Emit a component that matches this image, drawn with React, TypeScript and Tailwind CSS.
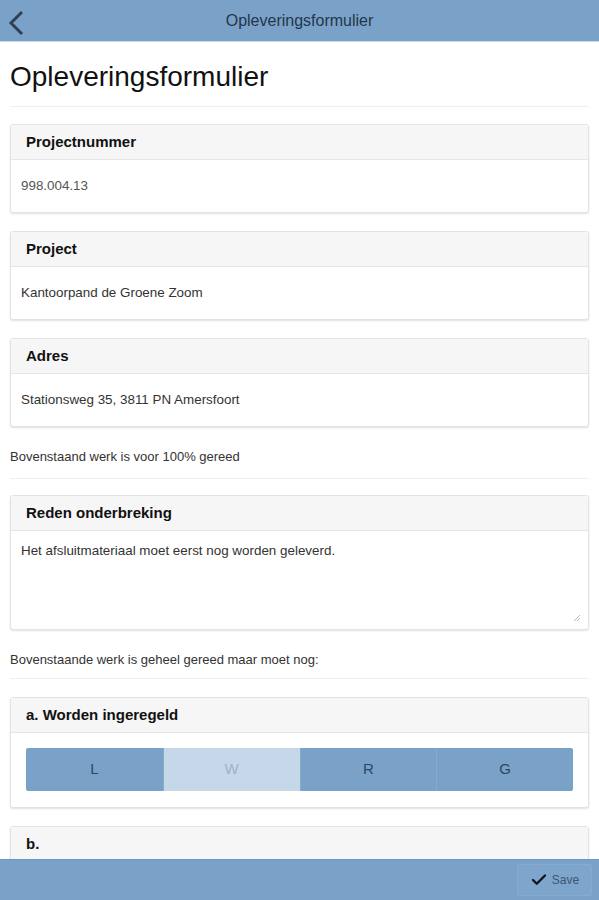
import { Check } from "lucide-react";

interface CardProps {
  title: string;
  children?: React.ReactNode;
}

function Card({ title, children }: CardProps) {
  return (
    <div className="mx-[10px] rounded-[3px] border border-[#e3e3e3] bg-white shadow-[0_1px_2px_rgba(0,0,0,0.12)]">
      <div className="flex h-[35px] items-center border-b border-[#e6e6e6] bg-[#f6f6f6] px-[15px] text-[15px] font-bold text-[#111]">
        {title}
      </div>
      {children}
    </div>
  );
}

function Note({ text, pb }: { text: string; pb: string }) {
  return (
    <div
      className={
        "mx-[10px] border-b border-[#f0f0f0] pt-[23px] text-[13px] leading-[14px] text-[#333] " +
        pb
      }
    >
      {text}
    </div>
  );
}

export default function App() {
  const segments = [
    { label: "L", active: true },
    { label: "W", active: false },
    { label: "R", active: true },
    { label: "G", active: true },
  ];

  return (
    <div className="flex h-[900px] w-[599px] flex-col overflow-hidden bg-white [font-family:'Liberation_Sans',Arial,sans-serif]">
      {/* top bar */}
      <div className="relative flex h-[42px] shrink-0 items-center justify-center border-b border-[#c9d9ea] bg-[#7aa2c9]">
        <svg
          className="absolute left-[7px] top-[10px]"
          width="18"
          height="26"
          viewBox="0 0 18 26"
          fill="none"
        >
          <path d="M15 2 L4 13 L15 24" stroke="#2f4154" strokeWidth="3" />
        </svg>
        <span className="text-[16px] text-[#24364a]">Opleveringsformulier</span>
      </div>

      <div className="flex-1 overflow-hidden">
        <h1 className="mx-[10px] border-b border-[#f0f0f0] pb-[14px] pt-[20px] text-[28px] font-normal leading-[30px] text-[#111]">
          Opleveringsformulier
        </h1>

        <div className="mt-[17px] flex flex-col gap-[18px]">
          <Card title="Projectnummer">
            <div className="flex h-[52px] items-center px-[10px] text-[13.4px] text-[#555]">
              998.004.13
            </div>
          </Card>
          <Card title="Project">
            <div className="flex h-[52px] items-center px-[10px] text-[13.4px] text-[#333]">
              Kantoorpand de Groene Zoom
            </div>
          </Card>
          <Card title="Adres">
            <div className="flex h-[52px] items-center px-[10px] text-[13.4px] text-[#333]">
              Stationsweg 35, 3811 PN Amersfoort
            </div>
          </Card>
        </div>

        <Note text="Bovenstaand werk is voor 100% gereed" pb="pb-[14px]" />

        <div className="mt-[16px]">
          <Card title="Reden onderbreking">
            <div className="relative h-[98px] px-[10px] pt-[10px] text-[13.4px] text-[#333]">
              Het afsluitmateriaal moet eerst nog worden geleverd.
              <svg
                className="absolute bottom-[8px] right-[8px]"
                width="6"
                height="6"
                viewBox="0 0 6 6"
              >
                <path d="M6 0 L0 6 M6 3 L3 6" stroke="#bbb" strokeWidth="1" />
              </svg>
            </div>
          </Card>
        </div>

        <Note text="Bovenstaande werk is geheel gereed maar moet nog:" pb="pb-[11px]" />

        <div className="mt-[18px] flex flex-col gap-[18px]">
          <Card title="a. Worden ingeregeld">
            <div className="px-[15px] pb-[16px] pt-[15px]">
              <div className="grid h-[43px] grid-cols-4 overflow-hidden rounded-[2px]">
                {segments.map((s, i) => (
                  <div
                    key={s.label}
                    className={
                      (s.active
                        ? "bg-[#7aa2c9] text-[#2e4760]"
                        : "bg-[#c6d7e9] text-[#9fb3c8]") +
                      (i > 0 ? " border-l border-[#86abcf]" : "") +
                      " flex items-center justify-center text-[15px]"
                    }
                  >
                    {s.label}
                  </div>
                ))}
              </div>
            </div>
          </Card>
          <Card title="b.">
            <div className="h-[40px]" />
          </Card>
        </div>
      </div>

      {/* bottom bar */}
      <div className="flex h-[41px] shrink-0 items-center justify-end border-t border-[#6f96bd] bg-[#7aa2c9] pr-[7px]">
        <button className="flex h-[32px] w-[75px] items-center justify-center gap-[4px] rounded-[2px] border border-[#86abd0] bg-[#7ea6cc] text-[12px] text-[#3c5670]">
          <Check className="h-[18px] w-[18px] text-[#111]" strokeWidth={3} />
          Save
        </button>
      </div>
    </div>
  );
}
